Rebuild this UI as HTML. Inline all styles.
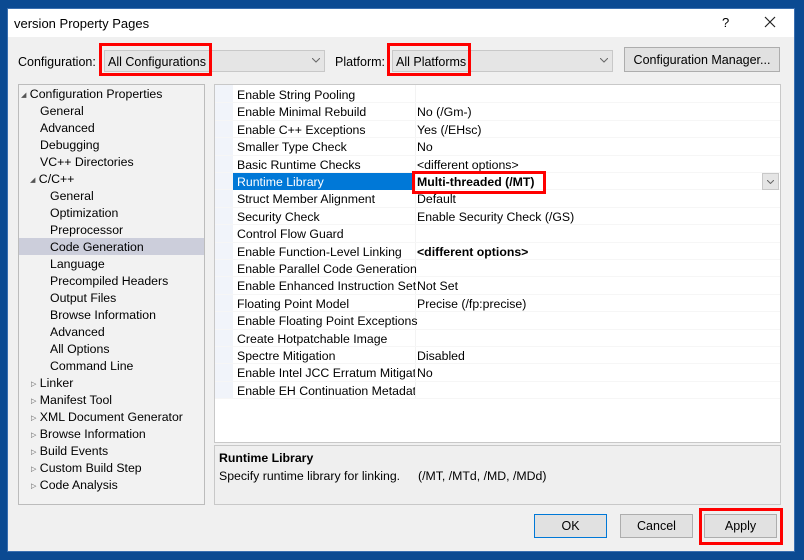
<!DOCTYPE html>
<html><head><style>
*{box-sizing:border-box;margin:0;padding:0}
body{width:804px;height:560px;background:#0b4a92;font-family:"Liberation Sans",sans-serif;font-size:12px;color:#000;position:relative;overflow:hidden}
.abs{position:absolute}
.dlg{left:7px;top:8px;width:788px;height:544px;background:#f0f0f0;border:1px solid #3a6fb0}
.title{left:8px;top:9px;width:786px;height:28px;background:#fff}
.red{position:absolute;border:3px solid #ff0000}
.combo{position:absolute;height:22px;background:#e5e5e5;border:1px solid #c8c8c8}
.btn{position:absolute;height:24px;background:#e1e1e1;border:1px solid #adadad;text-align:center;line-height:23px;font-size:12.5px}
.tree{left:18px;top:84px;width:187px;height:421px;background:#f2f2f2;border:1px solid #bcbcbc}
.tree div{position:absolute;height:17px;line-height:19px;white-space:nowrap;font-size:12.3px}
.grid{left:214px;top:84px;width:567px;height:359px;background:#fff;border:1px solid #c8c8c8}
.row{position:absolute;left:0;width:565px;height:17.4px;border-bottom:1px solid #f6f6f6}
.row span{position:absolute;line-height:19px;white-space:nowrap;font-size:12.3px}
.n{left:22px}.v{left:202px}
.tri{font-size:7px;color:#555;vertical-align:1px}
</style></head><body>
<div class="abs dlg"></div>
<div class="abs title"></div>
<div class="abs" style="left:14px;top:16px;font-size:13px">version Property Pages</div>
<div class="abs" style="left:722px;top:15px;font-size:13px">?</div>
<svg class="abs" style="left:764px;top:16px" width="12" height="12"><path d="M1 1L11 11M11 1L1 11" stroke="#222" stroke-width="1.2"/></svg>

<div class="abs" style="left:18px;top:55px;font-size:12.5px">Configuration:</div>
<div class="combo" style="left:104px;top:50px;width:221px"></div>
<div class="abs" style="left:108px;top:55px;font-size:12.5px">All Configurations</div>
<svg class="abs" style="left:312px;top:58px" width="8" height="5"><path d="M0 0L4 4L8 0" stroke="#666" fill="none"/></svg>
<div class="red" style="left:99px;top:43px;width:113px;height:33px"></div>
<div class="abs" style="left:335px;top:55px;font-size:12.5px">Platform:</div>
<div class="combo" style="left:392px;top:50px;width:221px"></div>
<div class="abs" style="left:396px;top:55px;font-size:12.5px">All Platforms</div>
<svg class="abs" style="left:600px;top:58px" width="8" height="5"><path d="M0 0L4 4L8 0" stroke="#666" fill="none"/></svg>
<div class="red" style="left:387px;top:43px;width:84px;height:33px"></div>
<div class="btn" style="left:624px;top:47px;width:156px;height:25px;line-height:25px">Configuration Manager...</div>

<div class="abs tree">
<div style="left:2px;top:0"><span class="tri">◢</span> Configuration Properties</div>
<div style="left:21px;top:17px">General</div>
<div style="left:21px;top:34px">Advanced</div>
<div style="left:21px;top:51px">Debugging</div>
<div style="left:21px;top:68px">VC++ Directories</div>
<div style="left:11px;top:85px"><span class="tri">◢</span> C/C++</div>
<div style="left:31px;top:102px">General</div>
<div style="left:31px;top:119px">Optimization</div>
<div style="left:31px;top:136px">Preprocessor</div>
<div style="left:0;top:153px;width:185px;background:#cccedb;padding-left:31px">Code Generation</div>
<div style="left:31px;top:170px">Language</div>
<div style="left:31px;top:187px">Precompiled Headers</div>
<div style="left:31px;top:204px">Output Files</div>
<div style="left:31px;top:221px">Browse Information</div>
<div style="left:31px;top:238px">Advanced</div>
<div style="left:31px;top:255px">All Options</div>
<div style="left:31px;top:272px">Command Line</div>
<div style="left:12px;top:289px"><span class="tri">▷</span> Linker</div>
<div style="left:12px;top:306px"><span class="tri">▷</span> Manifest Tool</div>
<div style="left:12px;top:323px"><span class="tri">▷</span> XML Document Generator</div>
<div style="left:12px;top:340px"><span class="tri">▷</span> Browse Information</div>
<div style="left:12px;top:357px"><span class="tri">▷</span> Build Events</div>
<div style="left:12px;top:374px"><span class="tri">▷</span> Custom Build Step</div>
<div style="left:12px;top:391px"><span class="tri">▷</span> Code Analysis</div>
</div>

<div class="abs grid">
<div class="abs" style="left:0;top:0;width:18px;height:314px;background:#f1f4fa"></div>
<div class="abs" style="left:200px;top:0;width:1px;height:314px;background:#f3f3f3"></div>
<div class="row" style="top:1px"><span class="n">Enable String Pooling</span></div>
<div class="row" style="top:18.4px"><span class="n">Enable Minimal Rebuild</span><span class="v">No (/Gm-)</span></div>
<div class="row" style="top:35.8px"><span class="n">Enable C++ Exceptions</span><span class="v">Yes (/EHsc)</span></div>
<div class="row" style="top:53.2px"><span class="n">Smaller Type Check</span><span class="v">No</span></div>
<div class="row" style="top:70.6px"><span class="n">Basic Runtime Checks</span><span class="v">&lt;different options&gt;</span></div>
<div class="row" style="top:88px"><div class="abs" style="left:18px;top:0;width:181px;height:17px;background:#0078d7"></div><span class="n" style="color:#fff">Runtime Library</span><span class="v" style="font-weight:bold">Multi-threaded (/MT)</span><div class="abs" style="left:547px;top:0;width:17px;height:17px;background:#e5e5e5;border:1px solid #c8c8c8"></div><svg class="abs" style="left:552px;top:7px" width="7" height="4"><path d="M0 0L3.5 3.5L7 0" stroke="#666" fill="none"/></svg></div>
<div class="row" style="top:105.4px"><span class="n">Struct Member Alignment</span><span class="v">Default</span></div>
<div class="row" style="top:122.8px"><span class="n">Security Check</span><span class="v">Enable Security Check (/GS)</span></div>
<div class="row" style="top:140.2px"><span class="n">Control Flow Guard</span></div>
<div class="row" style="top:157.6px"><span class="n">Enable Function-Level Linking</span><span class="v" style="font-weight:bold">&lt;different options&gt;</span></div>
<div class="row" style="top:175px"><span class="n">Enable Parallel Code Generation</span></div>
<div class="row" style="top:192.4px"><span class="n">Enable Enhanced Instruction Set</span><span class="v">Not Set</span></div>
<div class="row" style="top:209.8px"><span class="n">Floating Point Model</span><span class="v">Precise (/fp:precise)</span></div>
<div class="row" style="top:227.2px"><span class="n">Enable Floating Point Exceptions</span></div>
<div class="row" style="top:244.6px"><span class="n">Create Hotpatchable Image</span></div>
<div class="row" style="top:262px"><span class="n">Spectre Mitigation</span><span class="v">Disabled</span></div>
<div class="row" style="top:279.4px"><span class="n" style="width:178px;overflow:hidden">Enable Intel JCC Erratum Mitigation</span><span class="v">No</span></div>
<div class="row" style="top:296.8px"><span class="n" style="width:178px;overflow:hidden">Enable EH Continuation Metadata</span></div>
</div>
<div class="red" style="left:412px;top:171px;width:134px;height:23px"></div>

<div class="abs" style="left:214px;top:445px;width:567px;height:60px;border:1px solid #c8c8c8;background:#efefef"></div>
<div class="abs" style="left:219px;top:451px;font-weight:bold;font-size:12.3px">Runtime Library</div>
<div class="abs" style="left:219px;top:469px;font-size:12.3px">Specify runtime library for linking.</div>
<div class="abs" style="left:418px;top:469px;font-size:12.3px">(/MT, /MTd, /MD, /MDd)</div>

<div class="btn" style="left:534px;top:514px;width:73px;border:1px solid #0078d7">OK</div>
<div class="btn" style="left:620px;top:514px;width:73px">Cancel</div>
<div class="btn" style="left:704px;top:514px;width:73px">Apply</div>
<div class="red" style="left:699px;top:508px;width:84px;height:37px"></div>
</body></html>
